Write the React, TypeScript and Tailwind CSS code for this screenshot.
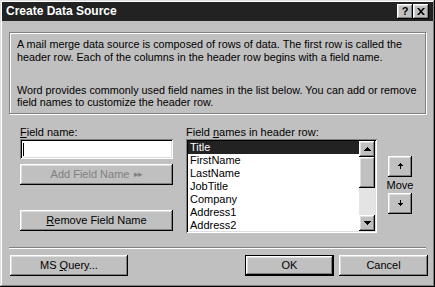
import React from "react";

const btn =
  "bg-[#c0c0c0] shadow-[inset_-1px_-1px_0_#000,inset_1px_1px_0_#fff,inset_-2px_-2px_0_#808080,inset_2px_2px_0_#dfdfdf] flex items-center justify-center";
const sunken =
  "shadow-[inset_1px_1px_0_#808080,inset_-1px_-1px_0_#fff,inset_2px_2px_0_#000,inset_-2px_-2px_0_#dfdfdf]";

function UpArrow() {
  return (
    <svg width="7" height="7" viewBox="0 0 7 7">
      <path d="M3 0h1v1h1v1h1v1H1V2h1V1h1z" fill="#000" />
      <rect x="3" y="3" width="1" height="3" fill="#000" />
    </svg>
  );
}
function DownArrow() {
  return (
    <svg width="7" height="7" viewBox="0 0 7 7">
      <rect x="3" y="0" width="1" height="3" fill="#000" />
      <path d="M1 3h5v1H5v1H4v1H3V5H2V4H1z" fill="#000" />
    </svg>
  );
}
function TriUp() {
  return (
    <svg width="7" height="4" viewBox="0 0 7 4">
      <path d="M3 0h1v1h1v1h1v1h1v1H0V3h1V2h1V1h1z" fill="#000" />
    </svg>
  );
}
function TriDown() {
  return (
    <svg width="7" height="4" viewBox="0 0 7 4">
      <path d="M0 0h7v1H6v1H5v1H4v1H3V3H2V2H1V1H0z" fill="#000" />
    </svg>
  );
}

export default function App() {
  const items = ["Title", "FirstName", "LastName", "JobTitle", "Company", "Address1", "Address2"];
  return (
    <div className="w-[435px] h-[287px] bg-[#c0c0c0] p-[2px] flex flex-col font-['Liberation_Sans',Arial,sans-serif] text-[11px] leading-[13px] text-black shadow-[inset_-1px_-1px_0_#000,inset_1px_1px_0_#dfdfdf,inset_-2px_-2px_0_#808080,inset_2px_2px_0_#fff] overflow-hidden">
      {/* Title bar */}
      <div className="h-[19px] bg-[#222] flex items-center pl-[4px] pr-[4px]">
        <div className="text-white font-bold text-[12px] leading-[19px] flex-1">Create Data Source</div>
        <div className={`${btn} w-[16px] h-[15px] font-bold text-[11px] leading-none`}>?</div>
        <div className={`${btn} w-[16px] h-[15px] ml-0 font-bold text-[11px] leading-none`}>
          <svg width="8" height="7" viewBox="0 0 8 7">
            <path d="M0 0h2l2 2.2L6 0h2L5 3.5 8 7H6L4 4.8 2 7H0l3-3.5z" fill="#000" />
          </svg>
        </div>
      </div>

      {/* Description group */}
      <div className="mx-[7px] mt-[11px] h-[82px] border border-[#808080] shadow-[1px_1px_0_#fff,inset_1px_1px_0_#fff] pl-[7px] pt-[5px] text-[10.8px]">
        <p className="leading-[13px]">
          A mail merge data source is composed of rows of data. The first row is called the
          <br />
          header row. Each of the columns in the header row begins with a field name.
        </p>
        <p className="mt-[20px] leading-[12px]">
          Word provides commonly used field names in the list below. You can add or remove
          <br />
          field names to customize the header row.
        </p>
      </div>

      {/* Main row */}
      <div className="flex mt-[12px] h-[107px]">
        <div className="ml-[18px] w-[153px] flex flex-col">
          <div className="h-[13px]">
            <span className="underline">F</span>ield name:
          </div>
          <div className={`${sunken} bg-white h-[20px] flex items-center pl-[3px]`}>
            <div className="w-[1px] h-[13px] bg-black" />
          </div>
          <div className={`${btn} h-[21px] mt-[5px] text-[#808080]`}>
            Add Field Name <span className="ml-[5px] text-[9px] tracking-[-1px]">▸▸</span>
          </div>
          <div className={`${btn} h-[21px] mt-[25px]`}>
            <span>
              <span className="underline">R</span>emove Field Name
            </span>
          </div>
        </div>

        <div className="ml-[13px] w-[191px] flex flex-col">
          <div className="h-[13px]">
            Field <span className="underline">n</span>ames in header row:
          </div>
          <div className={`${sunken} bg-white h-[94px] flex p-[2px]`}>
            <div className="flex-1 flex flex-col">
              {items.map((it, i) => (
                <div
                  key={it}
                  className={`h-[13px] leading-[13px] pl-[2px] ${i === 0 ? "bg-[#222] text-white" : ""}`}
                >
                  {it}
                </div>
              ))}
            </div>
            <div className="w-[16px] flex flex-col bg-[#e4e4e4]">
              <div className={`${btn} h-[16px]`}>
                <TriUp />
              </div>
              <div className={`${btn} h-[31px]`} />
              <div className="flex-1" />
              <div className={`${btn} h-[16px]`}>
                <TriDown />
              </div>
            </div>
          </div>
        </div>

        <div className="ml-[11px] w-[24px] flex flex-col items-center pt-[30px]">
          <div className={`${btn} w-[24px] h-[21px]`}>
            <UpArrow />
          </div>
          <div className="h-[16px] leading-[16px]">Move</div>
          <div className={`${btn} w-[24px] h-[21px]`}>
            <DownArrow />
          </div>
        </div>
      </div>

      {/* Separator */}
      <div className="mx-[7px] mt-[14px] h-[2px] border-t border-t-[#808080] border-b border-b-white" />

      {/* Bottom buttons */}
      <div className="flex mt-[6px] h-[21px]">
        <div className={`${btn} ml-[8px] w-[118px] h-[21px]`}>
          <span>
            MS <span className="underline">Q</span>uery...
          </span>
        </div>
        <div className="flex-1" />
        <div className="w-[89px] h-[21px] border border-black">
          <div className={`${btn} w-full h-full`}>OK</div>
        </div>
        <div className={`${btn} ml-[5px] w-[89px] h-[21px] mr-[5px]`}>Cancel</div>
      </div>
    </div>
  );
}
